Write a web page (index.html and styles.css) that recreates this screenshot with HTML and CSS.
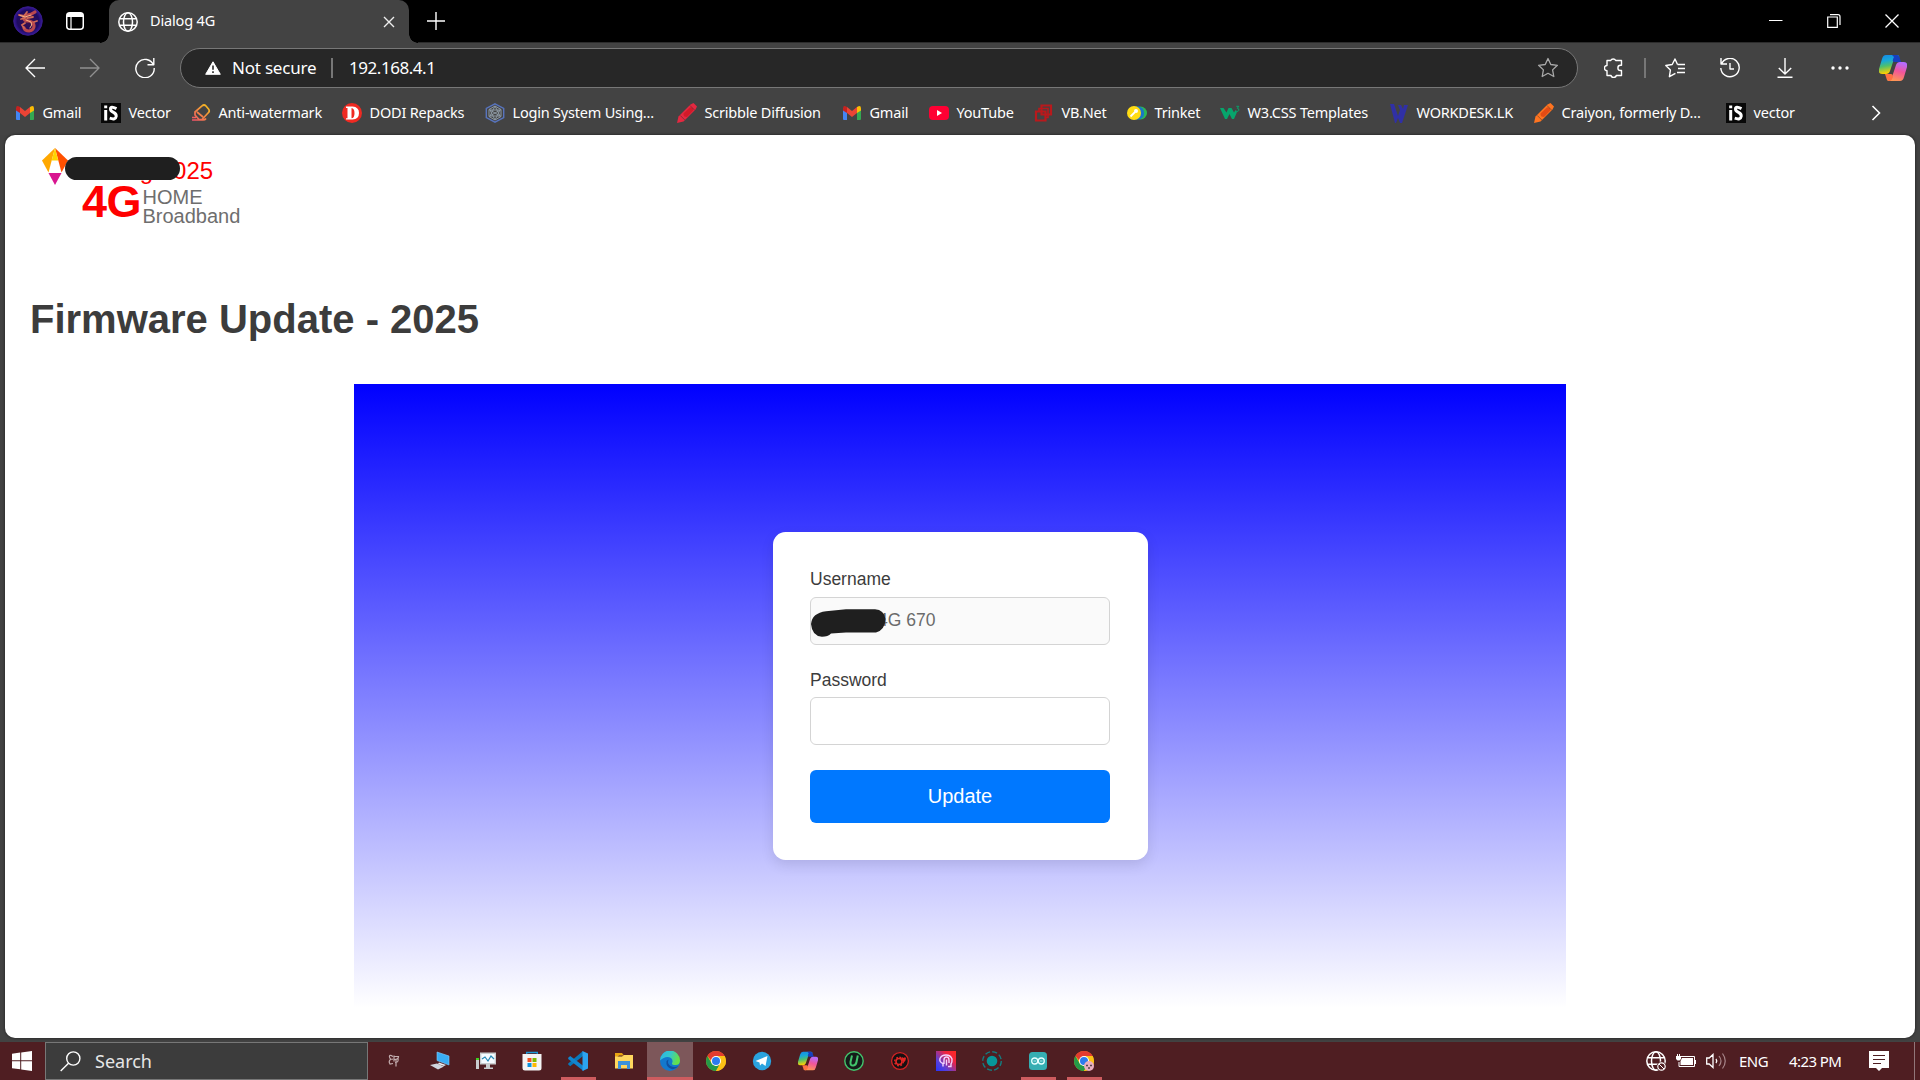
FILE: index.html
```html
<!DOCTYPE html>
<html lang="en">
<head>
<meta charset="utf-8">
<title>Dialog 4G</title>
<link rel="stylesheet" href="styles.css">
</head>
<body>
<svg class="defs" width="0" height="0" aria-hidden="true">
  <defs>
    <linearGradient id="cpA" x1="0" y1="0" x2="0.2" y2="1"><stop offset="0" stop-color="#1587e8"/><stop offset=".35" stop-color="#18a8d8"/><stop offset=".62" stop-color="#4fc06c"/><stop offset="1" stop-color="#ffd000"/></linearGradient>
    <linearGradient id="cpB" x1="0.6" y1="0" x2="0.3" y2="1"><stop offset="0" stop-color="#b46cff"/><stop offset=".45" stop-color="#f2559a"/><stop offset="1" stop-color="#ff9a50"/></linearGradient>
    <linearGradient id="pen" x1="0" y1="1" x2="1" y2="0"><stop offset="0" stop-color="#f0506a"/><stop offset="1" stop-color="#f5c21a"/></linearGradient>
    <linearGradient id="edgeTop" x1="0" y1="0" x2="1" y2="0.3"><stop offset="0" stop-color="#2bb4ea"/><stop offset=".55" stop-color="#35c8c8"/><stop offset="1" stop-color="#64e04a"/></linearGradient>
    <linearGradient id="head" x1="0" y1="1" x2="1" y2="0"><stop offset="0" stop-color="#2733ff"/><stop offset=".3" stop-color="#5a40d8"/><stop offset=".7" stop-color="#f02440"/><stop offset="1" stop-color="#ff2a20"/></linearGradient>
    <radialGradient id="av"><stop offset="0" stop-color="#3b1049"/><stop offset=".75" stop-color="#1e0b62"/><stop offset="1" stop-color="#3a1a9c"/></radialGradient>
  </defs>
  <symbol id="gmail" viewBox="0 0 20 20"><path fill="#4285f4" d="M1 5v11q0 1 1 1h3V8z"/><path fill="#34a853" d="M19 5v11q0 1-1 1h-3V8z"/><path fill="#ea4335" d="M5 10V4l5 4 5-4v6l-5 4z"/><path fill="#c5221f" d="M1 5.500q0-3 2.500-2.300L5 4v6L1 7.500z"/><path fill="#fbbc04" d="M19 5.500q0-3-2.500-2.300L15 4v6l4-2.500z"/></symbol>
  <symbol id="is" viewBox="0 0 20 20"><path fill="#080808" d="M0 0h20v20H0z"/><path fill="none" stroke="#fff" stroke-width="3" d="M4.700 7v10.500M4.700 2.500v2.800M15.500 5.600q-6-3-6 .3 0 2 3 3.500t2.700 4q-.5 3.800-6.500 1.800"/></symbol>
  <symbol id="crayon" viewBox="0 0 20 20"><path d="M0 20l1.500-6.500L13.500 1.500 16.500 0 20 3.500l-1.500 3L6.500 18.500z" fill="currentColor"/><path d="M6.500 10.500l6.500-6.300q3.500 0 3.300 3.300L10 14q-4 0-3.500-3.500z" fill="#b00000" opacity=".35"/><path d="M3.300 12.500l4.500 4.500M13 2.500l4.700 4.700" stroke="#333" stroke-width=".9" opacity=".55"/></symbol>
  <symbol id="copilot" viewBox="0 0 28 26"><path fill="url(#cpA)" d="M7 0h11q3 0 2 3h-3q-2 0-3 4l-3 9q-1 3-4 3H3q-4 0-3-5L3 4q1-4 4-4z"/><path fill="#173fc0" d="M13 0h5q2 0 3 4l1 3h-6q-4 0-1-5z"/><path fill="url(#cpB)" d="M21 26H10q-3 0-2-3h3q2 0 3-4l3-9q1-3 4-3h4q4 0 3 5l-3 10q-1 4-4 4z"/><path fill="#ff7043" d="M6 19h6q2 0 2 3-1 3-3 4-3 0-4-4z"/></symbol>
  <symbol id="globe" viewBox="0 0 20 20"><g fill="none" stroke="currentColor" stroke-width="1.500"><circle cx="10" cy="10" r="9.200"/><ellipse cx="10" cy="10" rx="4.500" ry="9.200"/><path d="M1.500 6.700h17M1.500 13.300h17"/></g></symbol>
  <symbol id="chrome" viewBox="0 0 20 20"><circle cx="10" cy="10" r="10" fill="#fbc116"/><path fill="#e33b2e" d="M10 10H5.700L1.340 5A10 10 0 0 1 18.660 5H10z"/><path fill="#249a48" d="M10 20A10 10 0 0 1 1.340 5L5.700 12.500 10 15l3.500-1z"/><path fill="#fbc116" d="M10 5h8.660A10 10 0 0 1 10 20l4.300-7.500z"/><circle cx="10" cy="10" r="5" fill="#fff"/><circle cx="10" cy="10" r="4" fill="#2b7bee"/></symbol>
</svg>

<div class="browser">
  <div class="titlebar">
    <svg class="avatar" width="30" height="30" viewBox="0 0 30 30"><circle cx="15" cy="15" r="14.300" fill="url(#av)" stroke="#351c87"/><g fill="none" stroke-linecap="round"><path d="M22 6q-4 3-8 3-4 1-3 4 1 2 5 2 5 1 5 5t-5 5q-4 0-5-3" stroke="#b9484e" stroke-width="3.200"/><path d="M6 9l5 1 3-4M8 13l4-1M12 17l-3 2 2 3M20 11l-6 1M21 16l3-1" stroke="#d06a55" stroke-width="1.800"/><path d="M7 9.500l5 1.500 6-2M13 14l5 2q2 3-1 6" stroke="#f7b283" stroke-width="1"/></g></svg>
    <svg class="workspace" width="18" height="18" viewBox="0 0 18 18"><rect x=".75" y=".75" width="16.500" height="16.500" rx="3" fill="none" stroke="#fff" stroke-width="1.500"/><path fill="#fff" d="M1 5V3q0-2 2-2h12q2 0 2 2v2z"/><path d="M5 5v12" stroke="#fff" stroke-width="1.200"/></svg>
    <div class="tab">
      <svg width="20" height="20"><use href="#globe"/></svg>
      <span class="tab-name">Dialog 4G</span>
      <svg width="12" height="12" viewBox="0 0 12 12"><path d="M1 1l10 10M11 1L1 11" stroke="#eee" stroke-width="1.400"/></svg>
    </div>
    <svg class="plus" width="18" height="18" viewBox="0 0 18 18"><path d="M9 0v18M0 9h18" stroke="#fff" stroke-width="1.400"/></svg>
    <div class="window-buttons">
      <svg width="14" height="14" viewBox="0 0 14 14"><path d="M0 6.500h13.500" stroke="#fff"/></svg>
      <svg width="14" height="14" viewBox="0 0 14 14"><path d="M.7 3h9.600v10.300H.7zM3 .7h8q2 0 2 2V11" fill="none" stroke="#fff" stroke-width="1.200"/></svg>
      <svg width="14" height="14" viewBox="0 0 14 14"><path d="M.5.500l13 13M13.500.500l-13 13" stroke="#fff" stroke-width="1.300"/></svg>
    </div>
  </div>

  <div class="toolbar">
    <span class="tool"><svg width="20" height="20" viewBox="0 0 20 20"><path d="M20 10H1M10 1L1 10l9 9" class="line"/></svg></span>
    <span class="tool dim"><svg width="20" height="20" viewBox="0 0 20 20"><path d="M0 10h19M10 1l9 9-9 9" class="line"/></svg></span>
    <span class="tool"><svg width="20" height="20" viewBox="0 0 20 20"><path d="M18.500 7A9.200 9.200 0 1 0 19.200 10M18.800 0v6.800H12.500" class="line"/></svg></span>
    <div class="address">
      <svg width="16" height="14" viewBox="0 0 16 14"><path fill="#fff" stroke="#fff" stroke-linejoin="round" d="M8 .8L15.300 13.300H.7z"/><path stroke="#272727" stroke-width="1.600" d="M8 4.500v4.300M8 10.200v1.700"/></svg>
      <span class="insecure">Not secure</span>
      <span class="divider"></span>
      <span class="url">192.168.4.1</span>
      <svg class="star" width="22" height="22" viewBox="0 0 22 22"><path d="M11 1.500l2.800 6 6.600.800-4.800 4.600 1.200 6.600L11 16.300l-5.800 3.200 1.200-6.600L1.600 8.300l6.600-.8z" fill="none" stroke="#aaa" stroke-width="1.300" stroke-linejoin="round"/></svg>
    </div>
    <span class="tool"><svg width="20" height="20" viewBox="0 0 20 20"><path d="M3 2.500h3.700a2.700 2.500 0 0 1 5 0h5.800v4.800h-1a2.600 2.600 0 0 0 0 5.200h1v5h-5.200a2.700 2.500 0 0 1-5.300 0H3v-4.800a2.600 2.600 0 0 1 0-5.200z" class="line"/></svg></span>
    <span class="divider side"></span>
    <span class="tool"><svg width="20" height="20" viewBox="0 0 20 20"><path d="M12.500 6.500L10 1 7.200 6.500l-6.400 1 4.600 4.600-1 6.600 6-3.300M12.500 6.500H20M13 10.500h7M12 14.500h8" class="line"/></svg></span>
    <span class="tool"><svg width="20" height="20" viewBox="0 0 20 20"><path d="M1 0v6h6M1.500 6A9.200 9.200 0 1 1 .8 10M10 5v6h4" class="line"/></svg></span>
    <span class="tool"><svg width="16" height="20" viewBox="0 0 16 20"><path d="M8 0v16M1.800 10L8 16l6.200-6M.5 19.300h15" class="line"/></svg></span>
    <span class="tool"><svg width="18" height="4" viewBox="0 0 18 4"><g fill="#fff"><circle cx="2" cy="2" r="1.700"/><circle cx="9" cy="2" r="1.700"/><circle cx="16" cy="2" r="1.700"/></g></svg></span>
    <span class="tool copilot"><svg width="28" height="26"><use href="#copilot"/></svg></span>
  </div>

  <div class="bookmarks">
    <span class="mark"><svg><use href="#gmail"/></svg><b>Gmail</b></span>
    <span class="mark"><svg><use href="#is"/></svg><b>Vector</b></span>
    <span class="mark"><svg viewBox="0 0 20 20"><path d="M4 9l7-6q2-2 4 0l2.500 3q1.500 2 0 3.500L11 16.500H8L4 12zM6 9l6 5M1 17h11q2 0 3-1.500M1 14.500h4" fill="none" stroke="url(#pen)" stroke-width="1.700"/></svg><b>Anti-watermark</b></span>
    <span class="mark"><svg viewBox="0 0 20 20"><circle cx="10" cy="10" r="10" fill="#ef2a22"/><path fill="#fff" fill-rule="evenodd" d="M4 3.500h6.500Q17 4 17 10t-6.500 6.500H4v-1.300h1.500V5H4zM9.500 5v10.200q3 0 3-5t-3-5.200z"/></svg><b>DODI Repacks</b></span>
    <span class="mark"><svg viewBox="0 0 20 20"><path d="M10 .8l8.700 4.700v9L10 19.200 1.300 14.500v-9z" fill="none" stroke="#5874bd" stroke-width="1.400"/><path d="M10 3l6 3.500v7L10 17l-6-3.500v-7zM4 6.500l12 7M16 6.500l-12 7M10 3l-5 10h10zM10 17L5 7h10z" fill="none" stroke="#8d99a3"/></svg><b>Login System Using...</b></span>
    <span class="mark"><svg class="red"><use href="#crayon"/></svg><b>Scribble Diffusion</b></span>
    <span class="mark"><svg><use href="#gmail"/></svg><b>Gmail</b></span>
    <span class="mark"><svg viewBox="0 0 20 20"><rect y="3" width="20" height="14" rx="4" fill="#ff0033"/><path fill="#fff" d="M8 7l5 3-5 3z"/></svg><b>YouTube</b></span>
    <span class="mark"><svg viewBox="0 0 20 20"><path d="M7.500 2.500H17v9H7.500zM2 8.500h9.500v9H2z" fill="none" stroke="#b9191c" stroke-width="2.200"/><path d="M5 9V5.500h9v9h-3" fill="none" stroke="#b9191c" stroke-width="1.600"/></svg><b>VB.Net</b></span>
    <span class="mark"><svg viewBox="0 0 20 20"><circle cx="13.500" cy="10" r="6.500" fill="#2db757"/><circle cx="10.500" cy="10" r="6.700" fill="#1976c8"/><circle cx="7" cy="10" r="7" fill="#ffdc13"/><path d="M3.500 13.500L8 9" stroke="#fff" stroke-width="1.800"/><circle cx="9" cy="8" r="2" fill="#fff"/></svg><b>Trinket</b></span>
    <span class="mark"><svg viewBox="0 0 20 20"><path fill="#07a56c" d="M0 5h3.500l3 4.500L8.500 5h3l2.500 4.500L15.500 7l1.500 2-3 7h-2L9.500 11 7 16H5z"/><path d="M16.300 3.300h2.500l-1.500 2q2 .2 1.500 2t-2.500.8" fill="none" stroke="#07a56c"/></svg><b>W3.CSS Templates</b></span>
    <span class="mark"><svg viewBox="0 0 20 20"><path d="M1 1h4l4 12 2-6-2-5h3l2 4 1-4h4l-6 18h-2l-2-5-2 5H6z" fill="#3030a5"/></svg><b>WORKDESK.LK</b></span>
    <span class="mark"><svg class="orange"><use href="#crayon"/></svg><b>Craiyon, formerly D...</b></span>
    <span class="mark"><svg><use href="#is"/></svg><b>vector</b></span>
    <svg class="more" width="10" height="16" viewBox="0 0 10 16"><path d="M1.500 1l7 7-7 7" fill="none" stroke="#fff" stroke-width="1.600"/></svg>
  </div>

  <main class="page">
    <header class="brand">
      <svg width="26" height="37" viewBox="0 0 26 37"><path fill="#ffa800" d="M13 0L0 12.500 6.500 24.500z"/><path fill="#ff5000" d="M13 0l13 12.500-6.500 12z"/><path fill="#ffd400" d="M13 0L9.700 12.500h6.600z"/><path fill="#d81590" d="M6.500 25h13L13 37z"/></svg>
      <div class="brand-text">
        <div class="brand-name">Dialog 2025<span class="cover"></span></div>
        <div class="brand-sub"><strong>4G</strong><span>HOME<br>Broadband</span></div>
      </div>
    </header>
    <h1>Firmware Update - 2025</h1>
    <section class="panel">
      <form class="card">
        <label for="user">Username</label>
        <div class="field">
          <input id="user" type="text" value="Dialog 4G 670" disabled>
          <svg class="scribble" width="75" height="28" viewBox="0 0 75 28"><path fill="#1f1f1f" d="M0 15Q1 4 15 2.200L35 .3H64Q73 1 74.500 10 74 21 65 23.500H35l-15 1q-3 3.300-9 3.300Q1 27 0 15z"/></svg>
        </div>
        <label for="pass">Password</label>
        <div class="field"><input id="pass" type="password"></div>
        <button type="button">Update</button>
      </form>
    </section>
  </main>
</div>

<div class="taskbar">
  <span class="start"><svg width="20" height="20" viewBox="0 0 20 20"><path fill="#fff" d="M0 2.800L8.200 1.600v7.700H0zM9.200 1.400L20 0v9.300H9.200zM0 10.300h8.200v8L0 17.200zM9.200 10.300H20V20L9.200 18.500z"/></svg></span>
  <div class="search"><svg width="21" height="21" viewBox="0 0 21 21"><circle cx="13.300" cy="7.500" r="6.600" fill="none" stroke="#fff" stroke-width="1.400"/><path d="M8.500 12.200L.7 20" stroke="#fff" stroke-width="1.400"/></svg><span>Search</span></div>
  <span class="app"><svg viewBox="0 0 20 20"><path d="M9 5.500Q5 3 5.500 6T9 8M7 8q-3 2-1 5l3-.5M10 4.500v6M10.500 5.500h4q0 3-4 3M14 7.500q1 4-3 4M12 8v7.500" fill="none" stroke="#c3adaf" stroke-width="1.200"/></svg></span>
  <span class="app"><svg viewBox="0 0 20 20"><path fill="#39adf5" stroke="#82cfff" stroke-width=".6" d="M7 1l12 4v9L7 9.500z"/><path fill="#cfd6df" d="M0 14l7-1.500 7 3-6 3z"/><path fill="#e9edf2" d="M9 11.500l7 2.500-2 1-6-2z"/></svg></span>
  <span class="app"><svg viewBox="0 0 20 20"><path fill="#c9cdcf" d="M0 7h3v11H0zM4 1.500h16v12H4zM10 13.500h4v3h3v1.500H8v-1.500h2z"/><path fill="#40d020" d="M0 7h3v2H0z"/><path fill="#f5fbff" d="M5.300 3h13.400v9H5.300z"/><path d="M6 8l3-2 3 4 3-5 3 3" fill="none" stroke="#2688b5" stroke-width="1.200"/></svg></span>
  <span class="app"><svg viewBox="0 0 20 20"><path d="M4.700 4V1.500h10.600V4" fill="none" stroke="#1c9bd8" stroke-width="1.300"/><path fill="#f4f4f4" d="M.5 3h19v14q0 2.500-2.500 2.500H3Q.5 19.500.5 17z"/><path fill="#f25022" d="M5.500 7h4v4h-4z"/><path fill="#7fba00" d="M10.500 7h4v4h-4z"/><path fill="#0c92df" d="M5.500 12h4v4h-4z"/><path fill="#ffb900" d="M10.500 12h4v4h-4z"/></svg></span>
  <span class="app open"><svg viewBox="0 0 20 20"><path fill="#0878ba" d="M15 0v5L2.200 15.200.2 13.500v-1z"/><path fill="#1285cf" d="M.2 6.800l2-1.700L15.500 15v5L.2 8z"/><path fill="#2ca4f1" d="M14.500 0L20 2.500v15L14.500 20z"/></svg></span>
  <span class="app"><svg viewBox="0 0 20 20"><path fill="#eaa512" d="M1 2h7l2 2.500H5L1 8z"/><path fill="#ffd75e" d="M1 5.500h7L10 4h9v13.500H1z"/><path fill="#3b92dc" d="M4 10h12v8h-3v-4H7v4H4z"/></svg></span>
  <span class="app active"><svg viewBox="0 0 20 20"><circle cx="10" cy="10" r="10" fill="#1378cd"/><path fill="url(#edgeTop)" d="M0 9.500A10 10 0 0 1 20 9.500q0 4.500-4.500 4.500-4 0-3.500-2 1.500-2.500-1-5Q6 4 0 9.500z"/><path fill="#114f9f" d="M6.500 10q-1 6 5 8 4 .8 7-3-4 2-8 0Q7 13 8.500 8.500z"/></svg></span>
  <span class="app"><svg><use href="#chrome"/></svg></span>
  <span class="app"><svg viewBox="0 0 20 20"><circle cx="10" cy="10" r="9.200" fill="#2aa3df"/><path fill="#fff" d="M3.500 10L15.500 5l-2 10-3.500-2.500L8 14.500 7.500 11.500z"/></svg></span>
  <span class="app"><svg><use href="#copilot"/></svg></span>
  <span class="app"><svg viewBox="0 0 20 20"><circle cx="10" cy="10" r="9.200" fill="#151c1a" stroke="#42c46c" stroke-width="1.400"/><path d="M8 4.500L6.500 11q-.5 4 3 3.500 2.500-.5 3-3.500l1.300-6.500" fill="none" stroke="#42c46c" stroke-width="2"/></svg></span>
  <span class="app"><svg viewBox="0 0 20 20"><circle cx="10" cy="10" r="8.400" fill="#161112" stroke="#d32324" stroke-width="1.300"/><circle cx="9" cy="10.500" r="3" fill="none" stroke="#e22725" stroke-width="1.600"/><circle cx="9" cy="10.500" r="4.300" fill="none" stroke="#e22725" stroke-width="1.400" stroke-dasharray="1.800 1.570"/><path fill="#e22725" d="M11 7.500q1.500-2 2.500-.5 2-1.500 2.500.5 0 2-2.500 4z"/></svg></span>
  <span class="app"><svg viewBox="0 0 20 20"><path fill="url(#head)" d="M0 0h20v20H0z"/><path d="M7 15.500v-3Q3 11 4 7.500 5.500 4 10 4t6 4q.3 3-1 5v2.500h-3M8 13V9q0-3 2.500-3T13 9v3M10.500 8.500v6" fill="none" stroke="#f4d5ff" stroke-width="1.400"/></svg></span>
  <span class="app"><svg viewBox="0 0 20 20"><circle cx="10" cy="10" r="5.300" fill="#07979a"/><circle cx="10" cy="10" r="9.300" fill="none" stroke="#147d80" stroke-width="1.400" stroke-dasharray="5 2.300"/></svg></span>
  <span class="app open"><svg viewBox="0 0 20 20"><rect x="1" y="1" width="18" height="18" rx="3.500" fill="#35aeb2"/><g fill="none" stroke="#e5ffff" stroke-width="1.300"><circle cx="6.700" cy="10" r="3"/><circle cx="13.300" cy="10" r="3"/></g><path d="M5.500 10H8M12 10h2.500" stroke="#e5ffff" stroke-width=".7"/></svg></span>
  <span class="app open"><svg viewBox="0 0 20 20"><use href="#chrome" width="20" height="20"/><circle cx="15" cy="15" r="5" fill="#e8afc2"/><path d="M12 14.500h2M16 14.500h2M14 17h2" stroke="#57464e" stroke-width="1.300"/></svg></span>
  <div class="tray">
    <svg width="20" height="20" viewBox="0 0 20 20"><use href="#globe" width="20" height="20"/><circle cx="15.500" cy="15.500" r="5" fill="#4f1e22"/><circle cx="15.500" cy="15.500" r="3.700" fill="none" stroke="#fff" stroke-width="1.200"/><path d="M13 13l5 5" stroke="#fff"/></svg>
    <svg width="20" height="14" viewBox="0 0 20 14"><path d="M5 2.500h13.500v10H3V8" fill="none" stroke="#fff"/><path fill="#fff" d="M6 4h11v7H4.500V7zM18.500 6H20v4h-1.500zM0 2h5v3L3.500 6.500h-2L0 5zM1 0h1v2H1zM3 0h1v2H3z"/></svg>
    <svg width="20" height="18" viewBox="0 0 20 18"><path d="M.7 6h2.500L7 2.500v13L3.200 12H.7zM10 7q1.500 2 0 4" fill="none" stroke="#fff" stroke-width="1.300"/><path d="M13 4q4 5 0 10M16.500 1.500q5.500 7.500 0 15" fill="none" stroke="#a78589" stroke-width="1.200"/></svg>
    <span class="lang">ENG</span>
    <span class="clock">4:23 PM</span>
    <svg class="note" width="20" height="20" viewBox="0 0 20 20"><path fill="#fff" d="M0 0h20v17h-7l-3 3-3-3H0z"/><path d="M4 4.500h12M4 8.500h12M4 12.500h8" stroke="#4f1e22" stroke-width="1.200"/></svg>
  </div>
</div>
</body>
</html>
```
FILE: styles.css
```css
* { box-sizing: border-box; }
body {
  margin: 0;
  width: 1920px;
  height: 1080px;
  overflow: hidden;
  display: flex;
  flex-direction: column;
  background: #424242;
  color: #fff;
  font-family: "Noto Sans", "Open Sans", sans-serif;
}
svg { display: block; flex: none; }
.defs { position: absolute; }

.browser { height: 1042px; display: flex; flex-direction: column; }

.titlebar { height: 43px; background: #000; border-bottom: 1px solid #2c2c2c; display: flex; align-items: center; }
.avatar { margin-left: 13px; }
.workspace { margin-left: 23px; margin-right: 25px; }
.tab {
  position: relative;
  align-self: flex-start;
  width: 300px;
  height: 43px;
  padding: 0 14px 0 9px;
  display: flex;
  align-items: center;
  background: #434343;
  border-radius: 10px 10px 0 0;
}
.tab::before, .tab::after {
  content: "";
  position: absolute;
  bottom: 0;
  width: 9px;
  height: 9px;
}
.tab::before { left: -9px; background: radial-gradient(circle at 0 0, #000 8.500px, #434343 9px); }
.tab::after { right: -9px; background: radial-gradient(circle at 100% 0, #000 8.500px, #434343 9px); }
.tab-name { flex: 1; margin-left: 12px; padding-bottom: 3px; font-size: 14.500px; letter-spacing: -.15px; }
.plus { margin-left: 17.500px; }
.window-buttons { margin-left: auto; margin-right: 21.500px; display: flex; gap: 44px; }

.toolbar { height: 49px; padding-left: 7.500px; display: flex; align-items: center; background: #434343; }
.tool { width: 55px; display: flex; justify-content: center; }
.tool.dim { color: #909090; }
.tool.copilot { margin-left: -2px; }
.line { fill: none; stroke: currentColor; stroke-width: 1.400; stroke-linejoin: round; }
.address {
  width: 1398px;
  height: 40px;
  margin: 1px 8.500px 0 7.500px;
  padding: 0 18px 1px 24px;
  display: flex;
  align-items: center;
  border: 1px solid #777;
  border-radius: 20px;
  background: #272727;
  font-size: 17px;
}
.insecure { width: 84px; margin-left: 11px; letter-spacing: -.2px; white-space: nowrap; }
.divider { width: 2px; height: 20px; background: #777; margin: 0 16px 0 15px; }
.divider.side { margin: 0 1px 0 3px; }
.url { letter-spacing: -.45px; }
.star { margin-left: auto; }

.bookmarks {
  height: 43px;
  padding: 0 0 2px 15px;
  display: grid;
  grid-template-columns: 86px 90px 151px 143px 192px 165px 87px 105px 93px 93px 169px 145px 192px 145px 10px;
  align-items: center;
  background: #434343;
}
.mark { display: flex; align-items: center; gap: 7.500px; }
.mark svg { width: 20px; height: 20px; }
.mark b { padding-bottom: 1px; font-weight: 400; font-size: 14.500px; letter-spacing: -.2px; white-space: nowrap; }
.mark .red { color: #e52840; }
.mark .orange { color: #ff7420; }

.page {
  height: 903px;
  margin: 0 5px;
  padding: 13px 25px 0;
  background: #fff;
  border-radius: 10px;
  box-shadow: 0 0 3px rgba(0, 0, 0, .6);
  color: #3c3c3c;
  font-family: "Liberation Sans", Arial, sans-serif;
}
.brand { display: flex; height: 148px; padding-left: 12px; }
.brand-text { padding-top: 9px; margin-left: 14px; }
.brand-name { position: relative; font-size: 24px; line-height: 28px; padding-left: 3px; color: #f00; }
.cover {
  position: absolute;
  left: -17px;
  top: 0;
  width: 115px;
  height: 23px;
  border-radius: 12px;
  background: #1f1f1f;
}
.brand-sub { display: flex; color: #6e6e6e; font-size: 20px; line-height: 19px; }
.brand-sub strong { width: 60.500px; color: #f00; font-size: 45px; line-height: 34px; letter-spacing: -.5px; }
.brand-sub span { padding-top: 3px; }
h1 { margin: 0; font-size: 40px; line-height: 46px; }

.panel {
  width: 1212px;
  height: 624px;
  margin: 42px auto 0;
  display: flex;
  align-items: center;
  justify-content: center;
  background: linear-gradient(#00f, #fff);
}
.card {
  width: 375px;
  padding: 37.500px;
  border-radius: 12.500px;
  background: #fff;
  box-shadow: 0 5px 12.500px rgba(0, 0, 0, .1);
  font-size: 17.500px;
}
.card label { display: block; height: 20px; line-height: 19px; margin-bottom: 7.500px; }
.card .field + label { line-height: 20px; }
.field { position: relative; height: 47.500px; margin-bottom: 25px; }
.field input {
  width: 100%;
  height: 48px;
  padding: 0 12.500px 2px;
  border: 1px solid #d4d4d4;
  border-radius: 6px;
  background: #fff;
  font: inherit;
}
.field input:disabled { background: #fafafa; color: #6b6b6b; }
.scribble { position: absolute; left: .5px; top: 11.500px; }
.card button {
  display: block;
  width: 100%;
  height: 53px;
  padding: 0;
  border: 0;
  border-radius: 6px;
  background: #0078ff;
  color: #fff;
  font: 20px "Liberation Sans", Arial, sans-serif;
}

.taskbar { height: 38px; display: flex; background: #4f1e22; }
.start { width: 45px; display: flex; align-items: center; padding-left: 12px; }
.search {
  width: 323px;
  margin-right: 3px;
  padding-left: 14px;
  display: flex;
  align-items: center;
  gap: 14px;
  background: #3c3c3c;
  border: 1px solid #777;
  color: #e6e6e6;
  font-size: 18px;
}
.app { width: 46px; display: flex; align-items: center; justify-content: center; }
.app svg { width: 20px; height: 20px; }
.app.active { background: #7d575a; border-bottom: 3px solid #cd5c5f; padding-top: 3px; }
.app.open { background: linear-gradient(#cd5c5f, #cd5c5f) 50% 100% / 35px 3px no-repeat; }
.tray {
  margin-left: auto;
  margin-right: 5px;
  padding-right: 25px;
  border-right: 1px solid #917679;
  display: flex;
  align-items: center;
  gap: 10px;
  font-size: 15px;
}
.lang { width: 28px; margin-left: 3px; letter-spacing: -.5px; }
.clock { width: 52px; margin-left: 12px; letter-spacing: -.6px; white-space: nowrap; }
.note { margin-left: 18px; }
```
